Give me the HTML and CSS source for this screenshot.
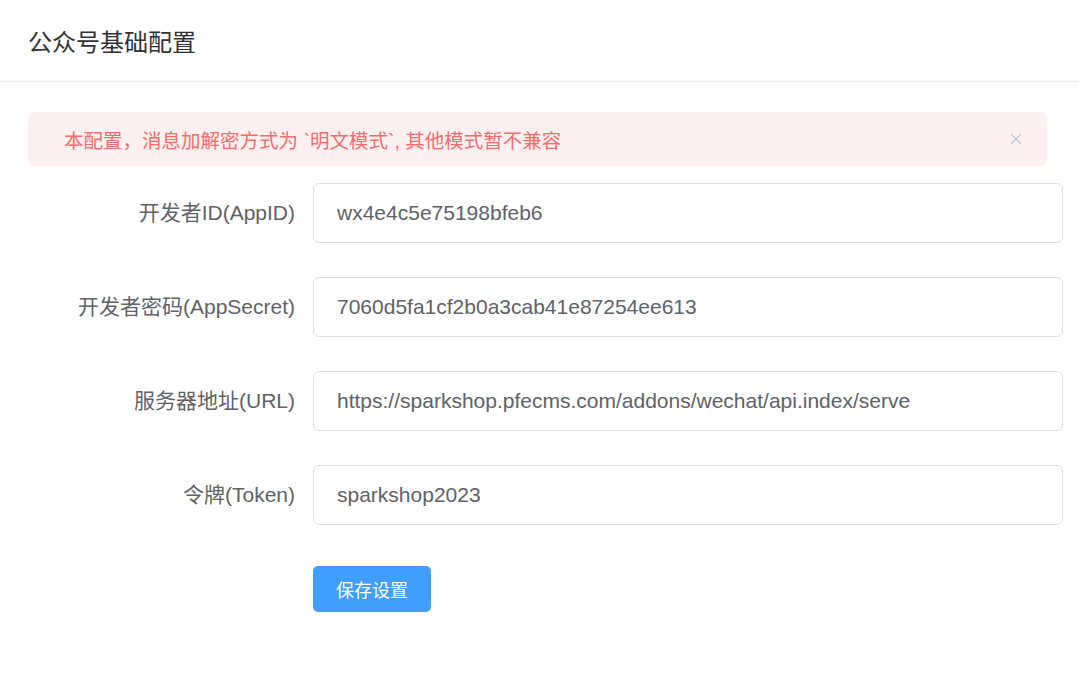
FILE: index.html
```html
<!DOCTYPE html>
<html>
<head>
<meta charset="utf-8">
<title>公众号基础配置</title>
<link rel="stylesheet" href="styles.css">
</head>
<body>

<div class="card">
    <div class="card-header">公众号基础配置</div>
    <div class="card-body">
        <div class="alert">
            <span class="alert-text">本配置，消息加解密方式为 `明文模式`, 其他模式暂不兼容</span>
            <svg class="alert-close" width="12" height="12" viewBox="0 0 12 12">
                <path d="M1 1L11 11M11 1L1 11" stroke="#c0c4cc" stroke-width="1.3" fill="none"/>
            </svg>
        </div>
        <form class="form">
            <div class="form-item">
                <label class="form-label">开发者ID(AppID)</label>
                <input type="text" class="form-input" value="wx4e4c5e75198bfeb6">
            </div>
            <div class="form-item">
                <label class="form-label">开发者密码(AppSecret)</label>
                <input type="text" class="form-input" value="7060d5fa1cf2b0a3cab41e87254ee613">
            </div>
            <div class="form-item">
                <label class="form-label">服务器地址(URL)</label>
                <input type="text" class="form-input" value="https://sparkshop.pfecms.com/addons/wechat/api.index/serve">
            </div>
            <div class="form-item">
                <label class="form-label">令牌(Token)</label>
                <input type="text" class="form-input" value="sparkshop2023">
            </div>
            <div class="form-item">
                <label class="form-label"></label>
                <button type="button" class="btn-primary">保存设置</button>
            </div>
        </form>
    </div>
</div>

</body>
</html>
```

FILE: styles.css
```css
body {
    margin: 0;
    background: #fff;
    font-family: "Liberation Sans", "Noto Sans CJK SC", sans-serif;
}
.card-header {
    height: 81px;
    display: flex;
    align-items: center;
    padding-left: 28px;
    border-bottom: 1px solid #ebeef5;
    font-size: 24px;
    color: #303133;
}
.card-body {
    padding: 30px 16px 40px 28px;
}
.alert {
    width: 1019px;
    height: 54px;
    box-sizing: border-box;
    display: flex;
    align-items: center;
    justify-content: space-between;
    padding: 0 25px 0 36px;
    background: #fef0f0;
    border-radius: 6px;
    color: #f56c6c;
    font-size: 19.5px;
}
.alert-close {
    cursor: pointer;
}
.form {
    margin-top: 17px;
}
.form-item {
    display: flex;
    align-items: center;
    min-height: 60px;
    margin-bottom: 34px;
}
.form-label {
    width: 285px;
    box-sizing: border-box;
    padding-right: 18px;
    text-align: right;
    font-size: 21px;
    color: #606266;
    line-height: 60px;
}
.form-input {
    flex: 1;
    height: 60px;
    box-sizing: border-box;
    border: 1px solid #dcdfe6;
    border-radius: 6px;
    padding: 0 23px;
    font-family: "Liberation Sans", "Noto Sans CJK SC", sans-serif;
    font-size: 21px;
    color: #606266;
    outline: none;
}
.btn-primary {
    height: 46px;
    padding: 0 23px;
    border: none;
    border-radius: 5px;
    background: #409eff;
    color: #fff;
    font-family: "Liberation Sans", "Noto Sans CJK SC", sans-serif;
    font-size: 18px;
    cursor: pointer;
}
```
